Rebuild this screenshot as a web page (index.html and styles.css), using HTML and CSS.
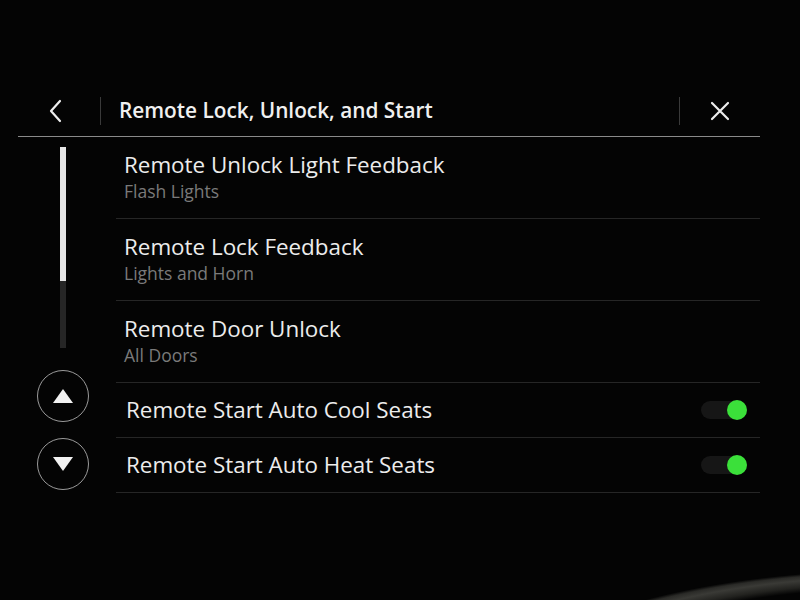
FILE: index.html
```html
<!DOCTYPE html>
<html lang="en">
<head>
  <meta charset="UTF-8">
  <meta name="viewport" content="width=device-width, initial-scale=1.0">
  <title>Remote Lock, Unlock, and Start</title>
  <link rel="stylesheet" href="styles.css">
</head>
<body>
  <div class="screen">
    <div class="header">
      <button class="icon-btn back">
        <svg width="16" height="24" viewBox="0 0 16 24"><path d="M12 2 L3 12 L12 22" fill="none" stroke="#eee" stroke-width="2.2" stroke-linecap="round" stroke-linejoin="round"/></svg>
      </button>
      <div class="title">Remote Lock, Unlock, and Start</div>
      <button class="icon-btn close">
        <svg width="20" height="20" viewBox="0 0 20 20"><path d="M2 2 L18 18 M18 2 L2 18" fill="none" stroke="#eee" stroke-width="2.2" stroke-linecap="round"/></svg>
      </button>
    </div>

    <div class="body">
      <div class="side">
        <div class="scrollbar"><div class="thumb"></div></div>
        <button class="round-btn">
          <svg width="24" height="20" viewBox="0 0 24 20"><path d="M12 3 L22 17 L2 17 Z" fill="#f2f2f2"/></svg>
        </button>
        <button class="round-btn">
          <svg width="24" height="20" viewBox="0 0 24 20"><path d="M2 3 L22 3 L12 17 Z" fill="#f2f2f2"/></svg>
        </button>
      </div>

      <div class="list">
        <div class="row">
          <div class="row-title">Remote Unlock Light Feedback</div>
          <div class="row-sub">Flash Lights</div>
        </div>
        <div class="row">
          <div class="row-title">Remote Lock Feedback</div>
          <div class="row-sub">Lights and Horn</div>
        </div>
        <div class="row">
          <div class="row-title">Remote Door Unlock</div>
          <div class="row-sub">All Doors</div>
        </div>
        <div class="row single">
          <div class="row-title">Remote Start Auto Cool Seats</div>
          <div class="switch on"><span class="knob"></span></div>
        </div>
        <div class="row single">
          <div class="row-title">Remote Start Auto Heat Seats</div>
          <div class="switch on"><span class="knob"></span></div>
        </div>
      </div>
    </div>
  </div>
</body>
</html>
```

FILE: styles.css
```css
html {
  overflow: hidden;
}
body {
  margin: 0;
  height: 600px;
  /* the grey bezel edge showing at the bottom right of the photo */
  background:
    radial-gradient(ellipse 400px 130px at 900px 700px, transparent 86%, #22221f 90%, #3a3a36 95%, #2a2a27 98%, transparent 100%),
    #040404;
  font-family: "Open Sans", "Noto Sans", sans-serif;
  color: #ececec;
}
button {
  background: none;
  border: none;
  padding: 0;
  cursor: pointer;
}
.screen {
  width: 742px;
  margin-left: 18px;
  padding-top: 86px;
}
.header {
  display: flex;
  align-items: center;
  height: 50px;
  border-bottom: 1px solid #8a8a8a;
}
.icon-btn {
  display: flex;
  align-items: center;
  justify-content: center;
  height: 28px;
}
.back {
  width: 83px;
  border-right: 1px solid #3a3a3a;
  padding-right: 7px;
  box-sizing: border-box;
}
.close {
  width: 81px;
  border-left: 1px solid #3a3a3a;
}
.title {
  flex: 1;
  padding-left: 18px;
  padding-bottom: 3px;
  font-size: 20.8px;
  font-weight: 600;
  color: #f0f0f0;
}
.body {
  display: flex;
}
.side {
  width: 98px;
  display: flex;
  flex-direction: column;
  align-items: center;
  padding-right: 8px;
  box-sizing: border-box;
}
.scrollbar {
  width: 6px;
  height: 201px;
  margin-top: 10px;
  background: #262626;
}
.thumb {
  height: 134px;
  background: #e6e6e6;
}
.round-btn {
  width: 52px;
  height: 52px;
  border: 1px solid #9a9a9a;
  border-radius: 50%;
  display: flex;
  align-items: center;
  justify-content: center;
  margin-top: 16px;
}
.round-btn:first-of-type {
  margin-top: 22px;
}
.list {
  flex: 1;
}
.row {
  height: 67px;
  border-bottom: 1px solid #262626;
  padding: 13px 8px 1px;
}
.row.single {
  height: 54px;
  padding: 0 13px 0 10px;
  display: flex;
  align-items: center;
  justify-content: space-between;
}
.row-title {
  font-size: 22.4px;
  line-height: 30px;
}
.row-sub {
  font-size: 17.5px;
  line-height: 22px;
  color: #7a7a7a;
}
.switch {
  width: 46px;
  height: 18px;
  border-radius: 9px;
  background: #161616;
  position: relative;
}
.knob {
  position: absolute;
  right: 0;
  top: -1px;
  width: 20px;
  height: 20px;
  border-radius: 50%;
  background: #3be03a;
}
```
